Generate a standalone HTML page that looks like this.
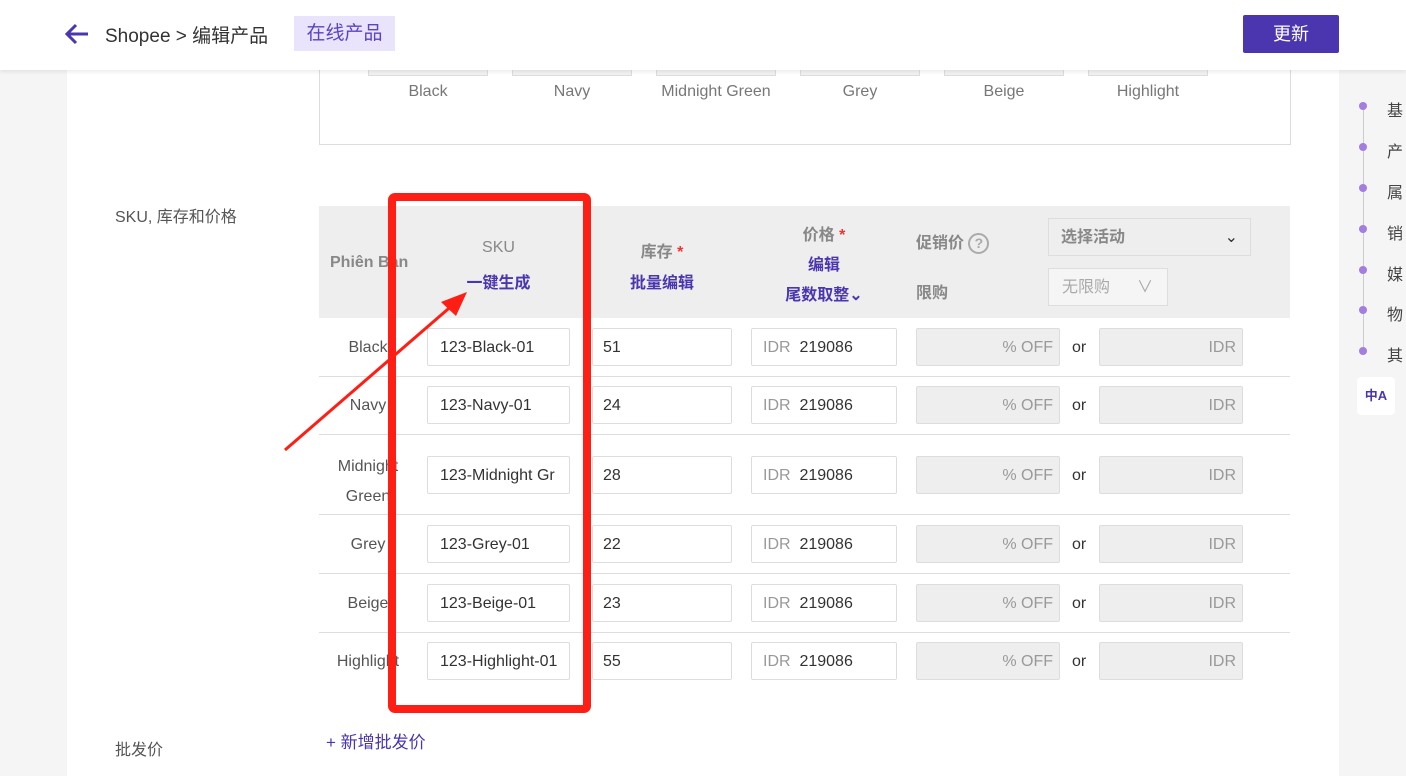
<!DOCTYPE html>
<html><head><meta charset="utf-8"><style>
*{box-sizing:border-box;margin:0;padding:0}
body{width:1406px;height:776px;overflow:hidden;background:#f5f5f5;font-family:"Liberation Sans","Noto Sans CJK SC",sans-serif;color:#333;position:relative;font-size:16px}
.a{position:absolute}
.hdr{left:0;top:0;width:1406px;height:70px;background:#fff;box-shadow:0 2px 4px rgba(0,0,0,.08);z-index:5}
.main{left:67px;top:70px;width:1272px;height:706px;background:#fff}
.in{position:absolute;height:38px;border:1px solid #ddd;border-radius:2px;background:#fff;font-size:16px;line-height:38px;padding-left:12px;color:#333;overflow:hidden;white-space:nowrap}
.g{background:#eee;color:#999;text-align:right;padding-right:6px}
.row{position:absolute;left:319px;width:971px;border-bottom:1px solid #ddd}
.lab{position:absolute;left:319px;width:98px;text-align:center;color:#555;font-size:16px}
.hd{color:#888;font-weight:bold;font-size:16px}
.lk{color:#4b36b0;font-weight:bold;font-size:16px}
.dot{position:absolute;left:1359px;width:8px;height:8px;border-radius:50%;background:#a37de0}
.sb{position:absolute;left:1387px;font-size:16px;color:#444}
</style></head><body>
<div class="a hdr">
 <svg class="a" style="left:64px;top:22px" width="26" height="24" viewBox="0 0 26 24"><path d="M24 12H4M12 3L3 12l9 9" stroke="#4b36b0" stroke-width="3" fill="none"/></svg>
 <div class="a" style="left:105px;top:21px;font-size:19px;color:#333">Shopee &gt; 编辑产品</div>
 <div class="a" style="left:294px;top:16px;width:101px;height:35px;background:#e9e3fb;color:#5a44c0;font-size:19px;line-height:35px;text-align:center">在线产品</div>
 <div class="a" style="left:1243px;top:15px;width:96px;height:38px;background:#4b36b0;color:#fff;font-size:18px;line-height:38px;text-align:center;border-radius:2px">更新</div>
</div>
<div class="a main"></div>
<div class="a" style="left:1339px;top:70px;width:67px;height:706px;background:#f5f5f5"></div>
<div class="a" style="left:1363px;top:106px;width:1px;height:246px;background:#ccc"></div>
<div class="dot" style="top:102px"></div><div class="sb" style="top:97px">基</div>
<div class="dot" style="top:143px"></div><div class="sb" style="top:138px">产</div>
<div class="dot" style="top:184px"></div><div class="sb" style="top:179px">属</div>
<div class="dot" style="top:225px"></div><div class="sb" style="top:220px">销</div>
<div class="dot" style="top:266px"></div><div class="sb" style="top:261px">媒</div>
<div class="dot" style="top:306px"></div><div class="sb" style="top:301px">物</div>
<div class="dot" style="top:347px"></div><div class="sb" style="top:342px">其</div>
<div class="a" style="left:1357px;top:377px;width:38px;height:38px;background:#fff;border-radius:4px;color:#4b36b0;font-size:13px;text-align:center;line-height:38px;font-weight:bold">中A</div>

<div class="a" style="left:319px;top:70px;width:972px;height:75px;border:1px solid #ddd;border-top:none"></div>
<div class="a" style="left:368px;top:70px;width:120px;height:6px;border:1px solid #ddd;border-top:none;background:#f2f2f2"></div>
<div class="a" style="left:512px;top:70px;width:120px;height:6px;border:1px solid #ddd;border-top:none;background:#f2f2f2"></div>
<div class="a" style="left:656px;top:70px;width:120px;height:6px;border:1px solid #ddd;border-top:none;background:#f2f2f2"></div>
<div class="a" style="left:800px;top:70px;width:120px;height:6px;border:1px solid #ddd;border-top:none;background:#f2f2f2"></div>
<div class="a" style="left:944px;top:70px;width:120px;height:6px;border:1px solid #ddd;border-top:none;background:#f2f2f2"></div>
<div class="a" style="left:1088px;top:70px;width:120px;height:6px;border:1px solid #ddd;border-top:none;background:#f2f2f2"></div>
<div class="a" style="left:368px;top:83px;width:120px;text-align:center;color:#777">Black</div>
<div class="a" style="left:512px;top:83px;width:120px;text-align:center;color:#777">Navy</div>
<div class="a" style="left:650px;top:83px;width:132px;text-align:center;color:#777">Midnight Green</div>
<div class="a" style="left:800px;top:83px;width:120px;text-align:center;color:#777">Grey</div>
<div class="a" style="left:944px;top:83px;width:120px;text-align:center;color:#777">Beige</div>
<div class="a" style="left:1088px;top:83px;width:120px;text-align:center;color:#777">Highlight</div>

<div class="a" style="left:115px;top:203px;color:#555">SKU, 库存和价格</div>
<div class="a" style="left:115px;top:736px;color:#555">批发价</div>
<div class="a" style="left:326px;top:728px;color:#4b36b0;font-size:17px">+ 新增批发价</div>

<div class="a" style="left:319px;top:206px;width:971px;height:112px;background:#eee"></div>
<div class="a hd" style="left:330px;top:254px;font-weight:bold">Phiên Bản</div>
<div class="a hd" style="left:427px;top:239px;width:143px;text-align:center;font-weight:normal">SKU</div>
<div class="a lk" style="left:427px;top:269px;width:143px;text-align:center">一键生成</div>
<div class="a hd" style="left:592px;top:238px;width:140px;text-align:center">库存 <span style="color:#e33">*</span></div>
<div class="a lk" style="left:592px;top:269px;width:140px;text-align:center">批量编辑</div>
<div class="a hd" style="left:751px;top:221px;width:146px;text-align:center">价格 <span style="color:#e33">*</span></div>
<div class="a lk" style="left:751px;top:251px;width:146px;text-align:center">编辑</div>
<div class="a lk" style="left:751px;top:281px;width:146px;text-align:center">尾数取整⌄</div>
<div class="a hd" style="left:916px;top:229px">促销价 <span style="display:inline-block;width:21px;height:21px;border:2px solid #aaa;border-radius:50%;text-align:center;line-height:17px;font-size:14px;color:#aaa;vertical-align:middle">?</span></div>
<div class="a hd" style="left:916px;top:279px">限购</div>
<div class="a" style="left:1048px;top:218px;width:203px;height:38px;border:1px solid #ddd;background:#eee;padding-left:12px;line-height:38px;color:#888;font-weight:bold">选择活动<span style="position:absolute;right:12px;color:#333;font-weight:normal">⌄</span></div>
<div class="a" style="left:1048px;top:268px;width:120px;height:38px;border:1px solid #ddd;background:#f5f5f5;padding-left:13px;line-height:38px;color:#aaa">无限购<span style="position:absolute;right:14px">∨</span></div>

<div class="row" style="top:318px;height:59px"></div>
<div class="row" style="top:377px;height:58px"></div>
<div class="row" style="top:435px;height:80px"></div>
<div class="row" style="top:515px;height:59px"></div>
<div class="row" style="top:574px;height:59px"></div>

<div class="lab" style="top:339px">Black</div>
<div class="lab" style="top:397px">Navy</div>
<div class="lab" style="top:452px;line-height:30px">Midnight<br>Green</div>
<div class="lab" style="top:536px">Grey</div>
<div class="lab" style="top:595px">Beige</div>
<div class="lab" style="top:653px">Highlight</div>

<div class="in" style="left:427px;top:328px;width:143px">123-Black-01</div>
<div class="in" style="left:427px;top:386px;width:143px">123-Navy-01</div>
<div class="in" style="left:427px;top:456px;width:143px">123-Midnight Gr</div>
<div class="in" style="left:427px;top:525px;width:143px">123-Grey-01</div>
<div class="in" style="left:427px;top:584px;width:143px">123-Beige-01</div>
<div class="in" style="left:427px;top:642px;width:143px">123-Highlight-01</div>

<div class="in" style="left:592px;top:328px;width:140px;padding-left:10px">51</div>
<div class="in" style="left:592px;top:386px;width:140px;padding-left:10px">24</div>
<div class="in" style="left:592px;top:456px;width:140px;padding-left:10px">28</div>
<div class="in" style="left:592px;top:525px;width:140px;padding-left:10px">22</div>
<div class="in" style="left:592px;top:584px;width:140px;padding-left:10px">23</div>
<div class="in" style="left:592px;top:642px;width:140px;padding-left:10px">55</div>

<div class="in" style="left:751px;top:328px;width:146px;padding-left:11px"><span style="color:#999">IDR</span>&nbsp; 219086</div>
<div class="in" style="left:751px;top:386px;width:146px;padding-left:11px"><span style="color:#999">IDR</span>&nbsp; 219086</div>
<div class="in" style="left:751px;top:456px;width:146px;padding-left:11px"><span style="color:#999">IDR</span>&nbsp; 219086</div>
<div class="in" style="left:751px;top:525px;width:146px;padding-left:11px"><span style="color:#999">IDR</span>&nbsp; 219086</div>
<div class="in" style="left:751px;top:584px;width:146px;padding-left:11px"><span style="color:#999">IDR</span>&nbsp; 219086</div>
<div class="in" style="left:751px;top:642px;width:146px;padding-left:11px"><span style="color:#999">IDR</span>&nbsp; 219086</div>

<div class="in g" style="left:916px;top:328px;width:144px">% OFF</div>
<div class="in g" style="left:916px;top:386px;width:144px">% OFF</div>
<div class="in g" style="left:916px;top:456px;width:144px">% OFF</div>
<div class="in g" style="left:916px;top:525px;width:144px">% OFF</div>
<div class="in g" style="left:916px;top:584px;width:144px">% OFF</div>
<div class="in g" style="left:916px;top:642px;width:144px">% OFF</div>
<div class="a" style="left:1072px;top:339px">or</div>
<div class="a" style="left:1072px;top:397px">or</div>
<div class="a" style="left:1072px;top:467px">or</div>
<div class="a" style="left:1072px;top:536px">or</div>
<div class="a" style="left:1072px;top:595px">or</div>
<div class="a" style="left:1072px;top:653px">or</div>
<div class="in g" style="left:1099px;top:328px;width:144px">IDR</div>
<div class="in g" style="left:1099px;top:386px;width:144px">IDR</div>
<div class="in g" style="left:1099px;top:456px;width:144px">IDR</div>
<div class="in g" style="left:1099px;top:525px;width:144px">IDR</div>
<div class="in g" style="left:1099px;top:584px;width:144px">IDR</div>
<div class="in g" style="left:1099px;top:642px;width:144px">IDR</div>

<div class="a" style="left:388px;top:193px;width:203px;height:520px;border:8px solid #ff1e14;border-radius:7px"></div>
<svg class="a" style="left:0;top:0" width="1406" height="776"><line x1="285" y1="450" x2="455" y2="303" stroke="#ff1e14" stroke-width="3"/><path d="M467 292 L441 302 L456 316 Z" fill="#ff1e14"/></svg>
</body></html>
